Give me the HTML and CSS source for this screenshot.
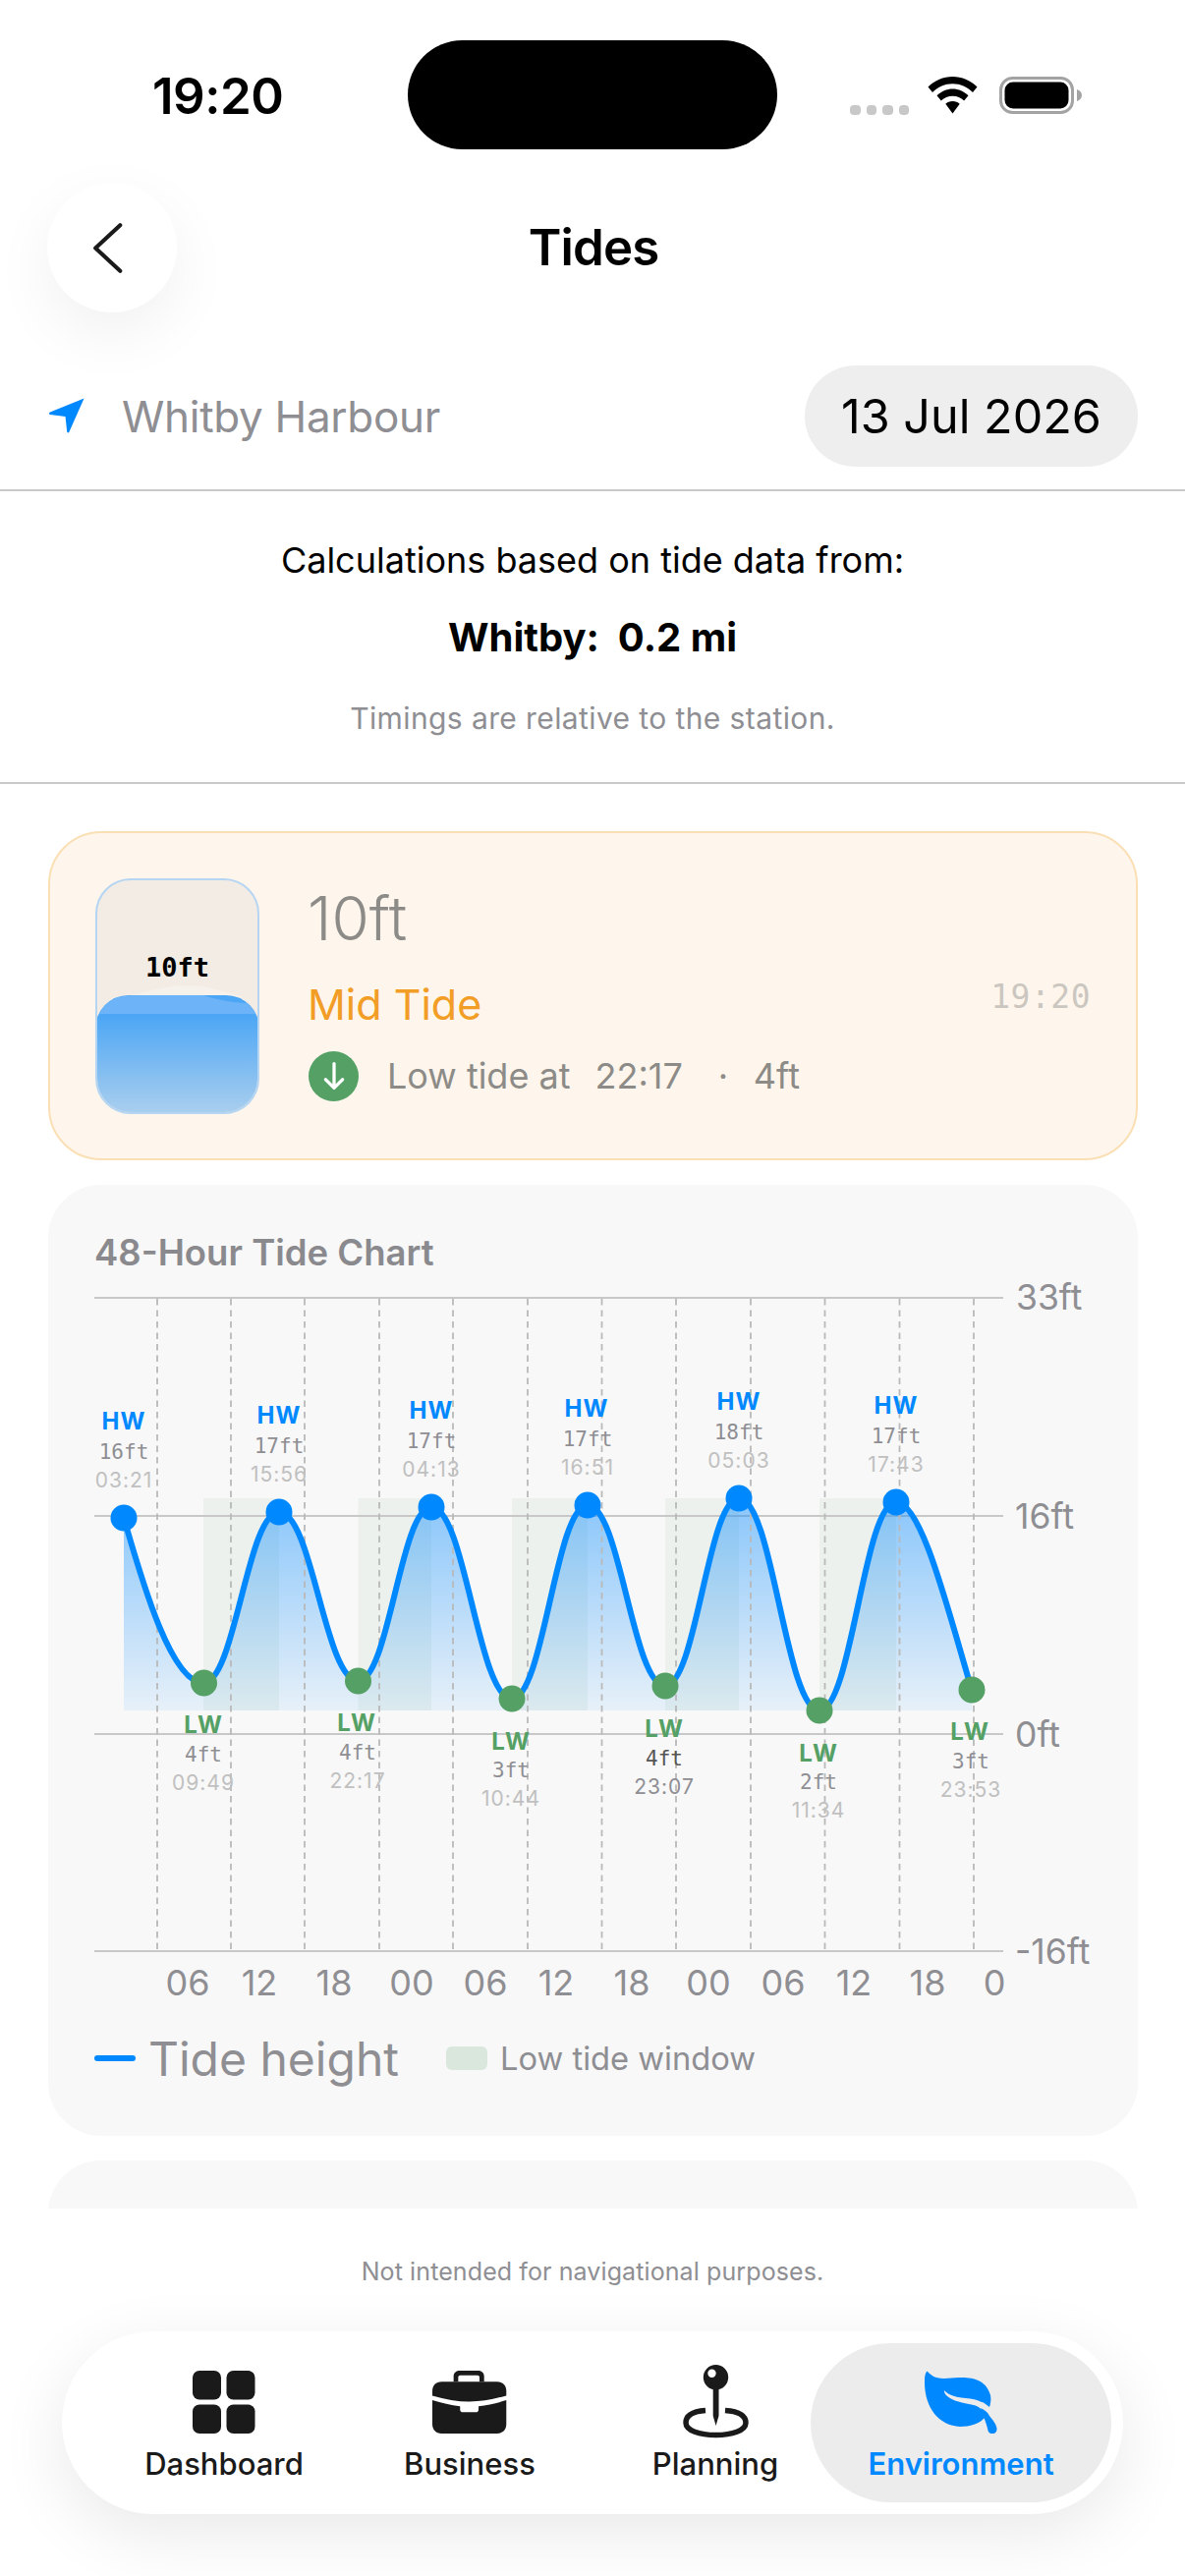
FILE: index.html
```html
<!DOCTYPE html>
<html lang="en">
<head>
<meta charset="utf-8">
<title>Tides</title>
<link rel="stylesheet" href="styles.css">
</head>
<body>
<div class="screen">
  <div class="status">
    <span class="clock">19:20</span>
    <div class="island"></div>
    <div class="status-icons">
      <div class="signal"><i></i><i></i><i></i><i></i></div>
      <svg class="wifi" viewBox="0 0 50 38"><path d="M25 0C15.500 0 7 3.800 0 10.500L4.500 16C10.200 10.500 17.300 7.300 25 7.300S39.800 10.500 45.500 16L50 10.500C43 3.800 34.500 0 25 0Z"/><path d="M25 12.500C19 12.500 13.500 15 9 19.200L13.300 24.500C16.500 21.500 20.500 19.700 25 19.700S33.500 21.500 36.700 24.500L41 19.200C36.500 15 31 12.500 25 12.500Z"/><path d="M25 25C22 25 19.800 26 17.800 27.800L25 37.500L32.200 27.800C30.200 26 28 25 25 25Z"/></svg>
      <svg class="battery" viewBox="0 0 84 38"><rect x="1.500" y="1.500" width="73" height="35" rx="12" fill="none" stroke="#a3a3a3" stroke-width="3"/><rect x="5.500" y="5.500" width="65" height="27" rx="8.500" fill="#000"/><path d="M79 13C82 14 84 16 84 19C84 22 82 24 79 25Z" fill="#a3a3a3"/></svg>
    </div>
  </div>

  <header class="nav">
    <button class="back"><svg viewBox="0 0 34 56" class="chev"><path d="M31 2.500L3.500 28L31 53.500"/></svg></button>
    <h1 class="title">Tides</h1>
  </header>

  <div class="loc">
    <div class="loc-name">
      <svg class="loc-arrow" viewBox="0 0 38 38"><path d="M36.500 .5L21 35.500C20.500 36.700 19 36.700 18.700 35.500L17 19.500L1 17.500C-.2 17.300-.3 15.500 1 15Z"/></svg>
      <span>Whitby Harbour</span>
    </div>
    <div class="date">13 Jul 2026</div>
  </div>

  <section class="info">
    <p class="info-a">Calculations based on tide data from:</p>
    <p class="info-b">Whitby:&nbsp;&nbsp;0.2 mi</p>
    <p class="info-c">Timings are relative to the station.</p>
  </section>

  <main class="cards">
    <section class="now">
      <div class="gauge">
        <svg class="gauge-bump" viewBox="0 0 167 12" preserveAspectRatio="none"><path d="M30 12C60 4 75 0 95 0C115 0 130 6 150 12Z"/></svg>
        <div class="gauge-water">
          <svg class="gauge-band" viewBox="0 0 167 19" preserveAspectRatio="none"><path d="M0 19V9C8 5 25 0 45 0H110C125 5 145 9 167 8V19Z"/></svg>
        </div>
        <span class="gauge-label">10ft</span>
      </div>
      <div class="now-body">
        <div class="now-height">10ft</div>
        <div class="now-state">Mid Tide</div>
        <div class="now-next">
          <span class="next-icon"><svg viewBox="0 0 24 30"><path d="M12 3V26M4 18L12 26L20 18"/></svg></span>
          <span class="next-a">Low tide at</span>
          <span class="next-b">22:17</span>
          <span class="next-c">·</span>
          <span class="next-d">4ft</span>
        </div>
      </div>
      <div class="now-time">19:20</div>
    </section>

    <section class="chart-card">
      <h2 class="chart-title">48-Hour Tide Chart</h2>
      <svg class="chart" viewBox="0 1300 1109 740">
        <defs>
          <linearGradient id="fill" gradientUnits="userSpaceOnUse" x1="0" y1="1525" x2="0" y2="1741">
            <stop offset="0" stop-color="#0088ff" stop-opacity=".45"/>
            <stop offset="1" stop-color="#0088ff" stop-opacity=".07"/>
          </linearGradient>
        </defs>
        <g transform="translate(-49 0)">
          <g class="win">
            <rect x="207" y="1525" width="77" height="216"/>
            <rect x="364.500" y="1525" width="74.500" height="216"/>
            <rect x="521" y="1525" width="77" height="216"/>
            <rect x="677" y="1525" width="75" height="216"/>
            <rect x="834" y="1525" width="78" height="216"/>
          </g>
          <path class="grid" d="M96 1321H1021M96 1543H1021M96 1765H1021M96 1986H1021"/>
          <path class="area" d="M126 1545C142 1600 173 1713 207 1713C239.300 1713 251.700 1539 284 1539C317.800 1539 330.700 1711 364.500 1711C395.800 1711 407.700 1534 439 1534C473.400 1534 486.600 1729 521 1729C553.300 1729 565.700 1532 598 1532C631.200 1532 643.800 1716 677 1716C708.500 1716 720.500 1525 752 1525C786.400 1525 799.600 1741 834 1741C866.800 1741 879.200 1529 912 1529C938 1529 965 1640 989 1720V1741H126Z"/>
          <path class="dash" d="M160 1322V1986M235 1322V1986M310 1322V1986M386 1322V1986M461 1322V1986M537 1322V1986M612.500 1322V1986M688 1322V1986M764 1322V1986M839.500 1322V1986M915.500 1322V1986M991 1322V1986"/>
          <path class="curve" d="M126 1545C142 1600 173 1713 207 1713C239.300 1713 251.700 1539 284 1539C317.800 1539 330.700 1711 364.500 1711C395.800 1711 407.700 1534 439 1534C473.400 1534 486.600 1729 521 1729C553.300 1729 565.700 1532 598 1532C631.200 1532 643.800 1716 677 1716C708.500 1716 720.500 1525 752 1525C786.400 1525 799.600 1741 834 1741C866.800 1741 879.200 1529 912 1529C938 1529 965 1640 989 1720"/>
          <g class="hw-dot">
            <circle cx="126" cy="1545" r="13.500"/><circle cx="284" cy="1539" r="13.500"/><circle cx="439" cy="1534" r="13.500"/><circle cx="598" cy="1532" r="13.500"/><circle cx="752" cy="1525" r="13.500"/><circle cx="912" cy="1529" r="13.500"/>
          </g>
          <g class="lw-dot">
            <circle cx="207.500" cy="1713" r="13.500"/><circle cx="364.500" cy="1711" r="13.500"/><circle cx="521" cy="1729" r="13.500"/><circle cx="677" cy="1716" r="13.500"/><circle cx="834" cy="1741" r="13.500"/><circle cx="989" cy="1720" r="13.500"/>
          </g>
          <g class="lbl">
            <text class="t-hw" x="126" y="1455">HW</text><text class="t-ft" x="126" y="1485">16ft</text><text class="t-tm" x="126" y="1514">03:21</text>
            <text class="t-hw" x="284" y="1449">HW</text><text class="t-ft" x="284" y="1479">17ft</text><text class="t-tm" x="284" y="1508">15:56</text>
            <text class="t-hw" x="439" y="1444">HW</text><text class="t-ft" x="439" y="1474">17ft</text><text class="t-tm" x="439" y="1503">04:13</text>
            <text class="t-hw" x="597" y="1442">HW</text><text class="t-ft" x="598" y="1472">17ft</text><text class="t-tm" x="598" y="1501">16:51</text>
            <text class="t-hw" x="752" y="1435">HW</text><text class="t-ft" x="752" y="1465">18ft</text><text class="t-tm" x="752" y="1494">05:03</text>
            <text class="t-hw" x="912" y="1439">HW</text><text class="t-ft" x="912" y="1469">17ft</text><text class="t-tm" x="912" y="1498">17:43</text>

            <text class="t-lw" x="207" y="1764">LW</text><text class="t-ft" x="207" y="1793">4ft</text><text class="t-tm" x="207" y="1822">09:49</text>
            <text class="t-lw" x="363" y="1762">LW</text><text class="t-ft" x="364" y="1791">4ft</text><text class="t-tm" x="364" y="1820">22:17</text>
            <text class="t-lw" x="520" y="1781">LW</text><text class="t-ft" x="520" y="1809">3ft</text><text class="t-tm" x="520" y="1838">10:44</text>
            <text class="t-lw" x="676" y="1768">LW</text><text class="t-ft t-dark" x="676" y="1797">4ft</text><text class="t-tm t-mid" x="676" y="1826">23:07</text>
            <text class="t-lw" x="833" y="1793">LW</text><text class="t-ft" x="833" y="1821">2ft</text><text class="t-tm" x="833" y="1850">11:34</text>
            <text class="t-lw" x="987" y="1771">LW</text><text class="t-ft" x="988" y="1800">3ft</text><text class="t-tm" x="988" y="1829">23:53</text>
          </g>
          <g class="axis-y">
            <text x="1034" y="1333">33ft</text><text x="1033" y="1556">16ft</text><text x="1033" y="1778">0ft</text><text x="1033" y="1999">-16ft</text>
          </g>
          <g class="axis-x">
            <text x="191" y="2031">06</text><text x="264" y="2031">12</text><text x="340" y="2031">18</text><text x="419" y="2031">00</text><text x="494" y="2031">06</text><text x="566" y="2031">12</text><text x="643" y="2031">18</text><text x="721" y="2031">00</text><text x="797" y="2031">06</text><text x="869" y="2031">12</text><text x="944" y="2031">18</text><text x="1012" y="2031">0</text>
          </g>
        </g>
      </svg>
      <div class="legend">
        <i class="leg-line"></i><span class="leg-a">Tide height</span>
        <i class="leg-box"></i><span class="leg-b">Low tide window</span>
      </div>
    </section>

    <section class="next-card"></section>
  </main>

  <footer class="sheet">
    <p class="disclaimer">Not intended for navigational purposes.</p>
    <nav class="tabs">
      <a class="tab">
        <svg class="ico" viewBox="0 0 64 64"><rect x="0" y="0" width="29" height="29.500" rx="7"/><rect x="34.500" y="0" width="29" height="29.500" rx="7"/><rect x="0" y="34.500" width="29" height="29.500" rx="7"/><rect x="34.500" y="34.500" width="29" height="29.500" rx="7"/></svg>
        <span>Dashboard</span>
      </a>
      <a class="tab">
        <svg class="ico" viewBox="0 0 80 68"><path d="M23 12V6C23 2 26 0 30 0H49C53 0 56 2 56 6V12H51V7C51 6 50 5 49 5H30C29 5 28 6 28 7V12Z"/><path d="M10 12H70C76 12 80 16 80 22V27C66 31 53 33.500 40 33.500S14 31 0 27V22C0 16 4 12 10 12Z"/><path d="M0 32C10 35 20 37.500 30 38.500V42C30 44 31 45 33 45H47C49 45 50 44 50 42V38.500C60 37.500 70 35 80 32V58C80 64 76 68 70 68H10C4 68 0 64 0 58Z"/></svg>
        <span>Business</span>
      </a>
      <a class="tab">
        <svg class="ico ico-pin" viewBox="0 0 67 75"><path class="pin-ring" d="M23 46.500C10 47.500 3 52 3 59C3 67 17 71.500 33.500 71.500S64 67 64 59C64 52 57 47.500 43 46.500"/><path fill-rule="evenodd" d="M33.500 0A12.700 12.700 0 1 1 33.500 25.400A12.700 12.700 0 1 1 33.500 0ZM29.500 4.500A4.200 4.200 0 1 0 29.500 12.900A4.200 4.200 0 1 0 29.500 4.500Z"/><path d="M30.700 22H36.500V52L33.600 62L30.700 52Z"/></svg>
        <span>Planning</span>
      </a>
      <a class="tab tab-on">
        <svg class="ico" viewBox="0 0 74 64"><path d="M2.500 .5C5 3 8 6 12 7C20 9 27 7 35 7C50 6.500 63 10 67 25C68 29 67 34 66 37C62 34 60 32 58 32C50 27 34 29 25 24C23 23 21 21 20 20C20 23 21 24 22 25C27 30 35 32 45 34C52 35 56 37 58 40C60 42 61 45 61 48C56 54 46 57 36 57C15 56 0 38 0 12C0 8 0 3 2.500 .5Z"/><path d="M57 38C61 40 64 42 66 46C69 50 73 54 73.500 59C74 65 66 66 64.500 61C63.500 56 62 52 60 47Z"/></svg>
        <span>Environment</span>
      </a>
    </nav>
  </footer>
</div>
</body>
</html>
```

FILE: styles.css
```css
* { box-sizing: border-box; }
html, body { margin: 0; padding: 0; background: #fff; }
body { font-family: Inter, "Liberation Sans", sans-serif; color: #000; }
p, h1, h2 { margin: 0; }

.screen { position: relative; width: 1206px; height: 2622px; overflow: hidden; background: #fff; }

.status { height: 186px; padding-top: 41px; display: flex; align-items: flex-start; position: relative; }
.clock { position: absolute; left: 155px; top: 70px; font-size: 51px; line-height: 56px; font-weight: 600; letter-spacing: -.5px; }
.island { width: 376px; height: 111px; border-radius: 56px; background: #000; margin-left: 415px; }
.status-icons { position: absolute; left: 865px; top: 78px; display: flex; align-items: flex-start; }
.signal { display: flex; gap: 6px; margin-top: 29px; width: 78px; flex: none; }
.signal i { width: 10.500px; height: 10px; border-radius: 4px; background: #c8c8c8; }
.wifi { width: 53px; height: 38px; fill: #000; }
.battery { width: 84px; height: 38px; margin-left: 21px; }

.nav { height: 132px; position: relative; display: flex; align-items: center; justify-content: center; }
.back { position: absolute; left: 48px; top: 0; width: 132px; height: 132px; border: 0; padding: 0; border-radius: 50%; background: #fff; box-shadow: 0 22px 64px rgba(0,0,0,.06); display: flex; align-items: center; justify-content: center; }
.chev { width: 31px; height: 53px; fill: none; stroke: #1a1a1a; stroke-width: 4.500; stroke-linecap: round; stroke-linejoin: round; margin-right: 9px; }
.title { font-size: 51px; line-height: 60px; font-weight: 600; margin-left: 2px; letter-spacing: -.9px; }

.loc { margin-top: 54px; height: 128px; padding: 0 48px 24px 50px; display: flex; align-items: center; justify-content: space-between; border-bottom: 2px solid #c9c9cb; }
.loc-name { display: flex; align-items: center; gap: 37px; font-size: 44px; letter-spacing: -.3px; color: #8e8e93; }
.loc-name span { position: relative; top: 1px; }
.loc-arrow { width: 37px; height: 37px; fill: #0088ff; }
.date { width: 339px; height: 103px; border-radius: 52px; background: #eee; font-size: 48.500px; display: flex; align-items: center; justify-content: center; }

.info { height: 298px; padding-top: 47px; text-align: center; border-bottom: 2px solid #c9c9cb; }
.info-a { font-size: 36px; line-height: 46px; }
.info-b { font-size: 40px; line-height: 48px; font-weight: 700; margin-top: 32px; }
.info-c { font-size: 30px; line-height: 40px; color: #8e8e93; margin-top: 38px; letter-spacing: .4px; }

.cards { padding: 48px 48px 0 49px; display: flex; flex-direction: column; gap: 25px; }

.now { height: 335px; border-radius: 54px; background: #fef6ec; border: 2px solid #fbdfb4; padding: 46px 0 0 46px; display: flex; position: relative; }
.gauge { position: relative; width: 167px; height: 240px; border: 2px solid #b5d5f2; border-radius: 36px; background: #f2ece5; overflow: hidden; flex: none; }
.gauge-bump { position: absolute; left: -2px; width: 167px; top: 107px; height: 12px; fill: #f6f1ea; display: block; }
.gauge-water { position: absolute; left: -2px; right: -2px; bottom: -2px; height: 121px; border-radius: 34px; overflow: hidden; background: linear-gradient(#4ba6f5 16%, #abcfee 100%); }
.gauge-band { display: block; width: 100%; height: 19px; fill: #6cb3f7; }
.gauge-label { position: absolute; left: 0; right: 0; top: 72px; text-align: center; font-family: "DejaVu Sans Mono", monospace; font-size: 27px; line-height: 34px; font-weight: 700; color: #000; }
.now-body { margin-left: 49px; }
.now-height { font-size: 62px; line-height: 70px; color: #8c8b87; margin-top: 6px; font-weight: 300; }
.now-state { font-size: 43px; line-height: 52px; color: #f29d26; margin-top: 26px; }
.now-next { display: flex; align-items: center; margin-top: 21px; color: #8c8b87; font-size: 36px; height: 52px; }
.next-icon { width: 51px; height: 51px; border-radius: 50%; background: #54a065; display: flex; align-items: center; justify-content: center; margin-left: 1px; }
.next-icon svg { width: 26px; height: 33px; fill: none; stroke: #fff; stroke-width: 3; stroke-linecap: round; stroke-linejoin: round; }
.next-a { margin-left: 29px; }
.next-b { margin-left: 25px; }
.next-c { margin-left: 10px; width: 62px; text-align: center; }
.now-time { position: absolute; right: 46px; top: 147px; font-family: "DejaVu Sans Mono", monospace; font-size: 33px; line-height: 40px; color: #cbc7c0; letter-spacing: .5px; }

.chart-card { height: 968px; border-radius: 54px; background: #f8f8f8; padding: 46px 0 0 47px; position: relative; }
.chart-title { font-size: 36.500px; line-height: 46px; font-weight: 600; color: #8a8a8e; }
.chart { display: block; width: 1109px; height: 740px; position: absolute; left: 0; top: 94px; }
.win rect { fill: #54a065; fill-opacity: .07; }
.grid { fill: none; stroke: #c8c8c8; stroke-width: 2; }
.area { fill: url(#fill); }
.dash { fill: none; stroke: #b9b9b9; stroke-width: 1.800; stroke-dasharray: 6.500 5; }
.curve { fill: none; stroke: #0088ff; stroke-width: 6; stroke-linecap: round; }
.hw-dot { fill: #0088ff; }
.lw-dot { fill: #54a065; }
.lbl text { text-anchor: middle; }
.t-hw { font-size: 24px; font-weight: 700; fill: #0088ff; letter-spacing: 1px; }
.t-lw { font-size: 24px; font-weight: 700; fill: #54a065; letter-spacing: 1px; }
.t-ft { font-family: "DejaVu Sans Mono", monospace; font-size: 21px; fill: #8e8e93; }
.t-tm { font-size: 21px; fill: #c0c0c0; letter-spacing: 1px; }
.t-dark { fill: #555; }
.t-mid { fill: #8e8e93; }
.axis-y text { font-size: 35.500px; fill: #8e8e93; }
.axis-x text { font-size: 36px; fill: #8e8e93; text-anchor: middle; }

.legend { position: absolute; left: 47px; top: 857px; display: flex; align-items: center; height: 64px; }
.leg-line { width: 42px; height: 6px; background: #0088ff; border-radius: 3px; }
.leg-a { font-size: 48px; color: #8e8e93; margin-left: 13px; }
.leg-box { width: 42px; height: 24px; background: #d9e7dd; border-radius: 6px; margin-left: 48px; }
.leg-b { font-size: 32.700px; color: #8e8e93; margin-left: 13px; }

.next-card { height: 120px; border-radius: 54px 54px 0 0; background: #f8f8f8; }

.sheet { position: absolute; left: 0; right: 0; top: 2248px; bottom: 0; background: #fff; }
.disclaimer { text-align: center; font-size: 25px; line-height: 32px; margin-top: 48px; color: #8e8e93; letter-spacing: .1px; }
.tabs { position: absolute; left: 63px; top: 125px; width: 1080px; height: 186px; border-radius: 93px; background: #fff; box-shadow: 0 20px 70px rgba(0,0,0,.09); display: flex; padding: 12px 12px 12px 0; }
.tab { height: 162px; display: flex; flex-direction: column; align-items: center; color: #1a1a1a; font-size: 31px; font-weight: 500; line-height: 40px; }
.tab:nth-child(1) { width: 330px; }
.tab:nth-child(2) { width: 170px; }
.tab:nth-child(3) { width: 330px; }
.tab-on { width: 306px; margin-left: -68px; border-radius: 81px; background: #ececec; color: #0088ff; font-weight: 600; }
.tab .ico { height: 64px; width: auto; margin-top: 28px; margin-bottom: 11px; fill: #1a1a1a; display: block; flex: none; }
.tab-on .ico { fill: #0088ff; }
.tab .ico-pin { height: 75px; margin-top: 22px; margin-bottom: 6px; }
.pin-ring { fill: none; stroke: #1a1a1a; stroke-width: 5.500; }
```
